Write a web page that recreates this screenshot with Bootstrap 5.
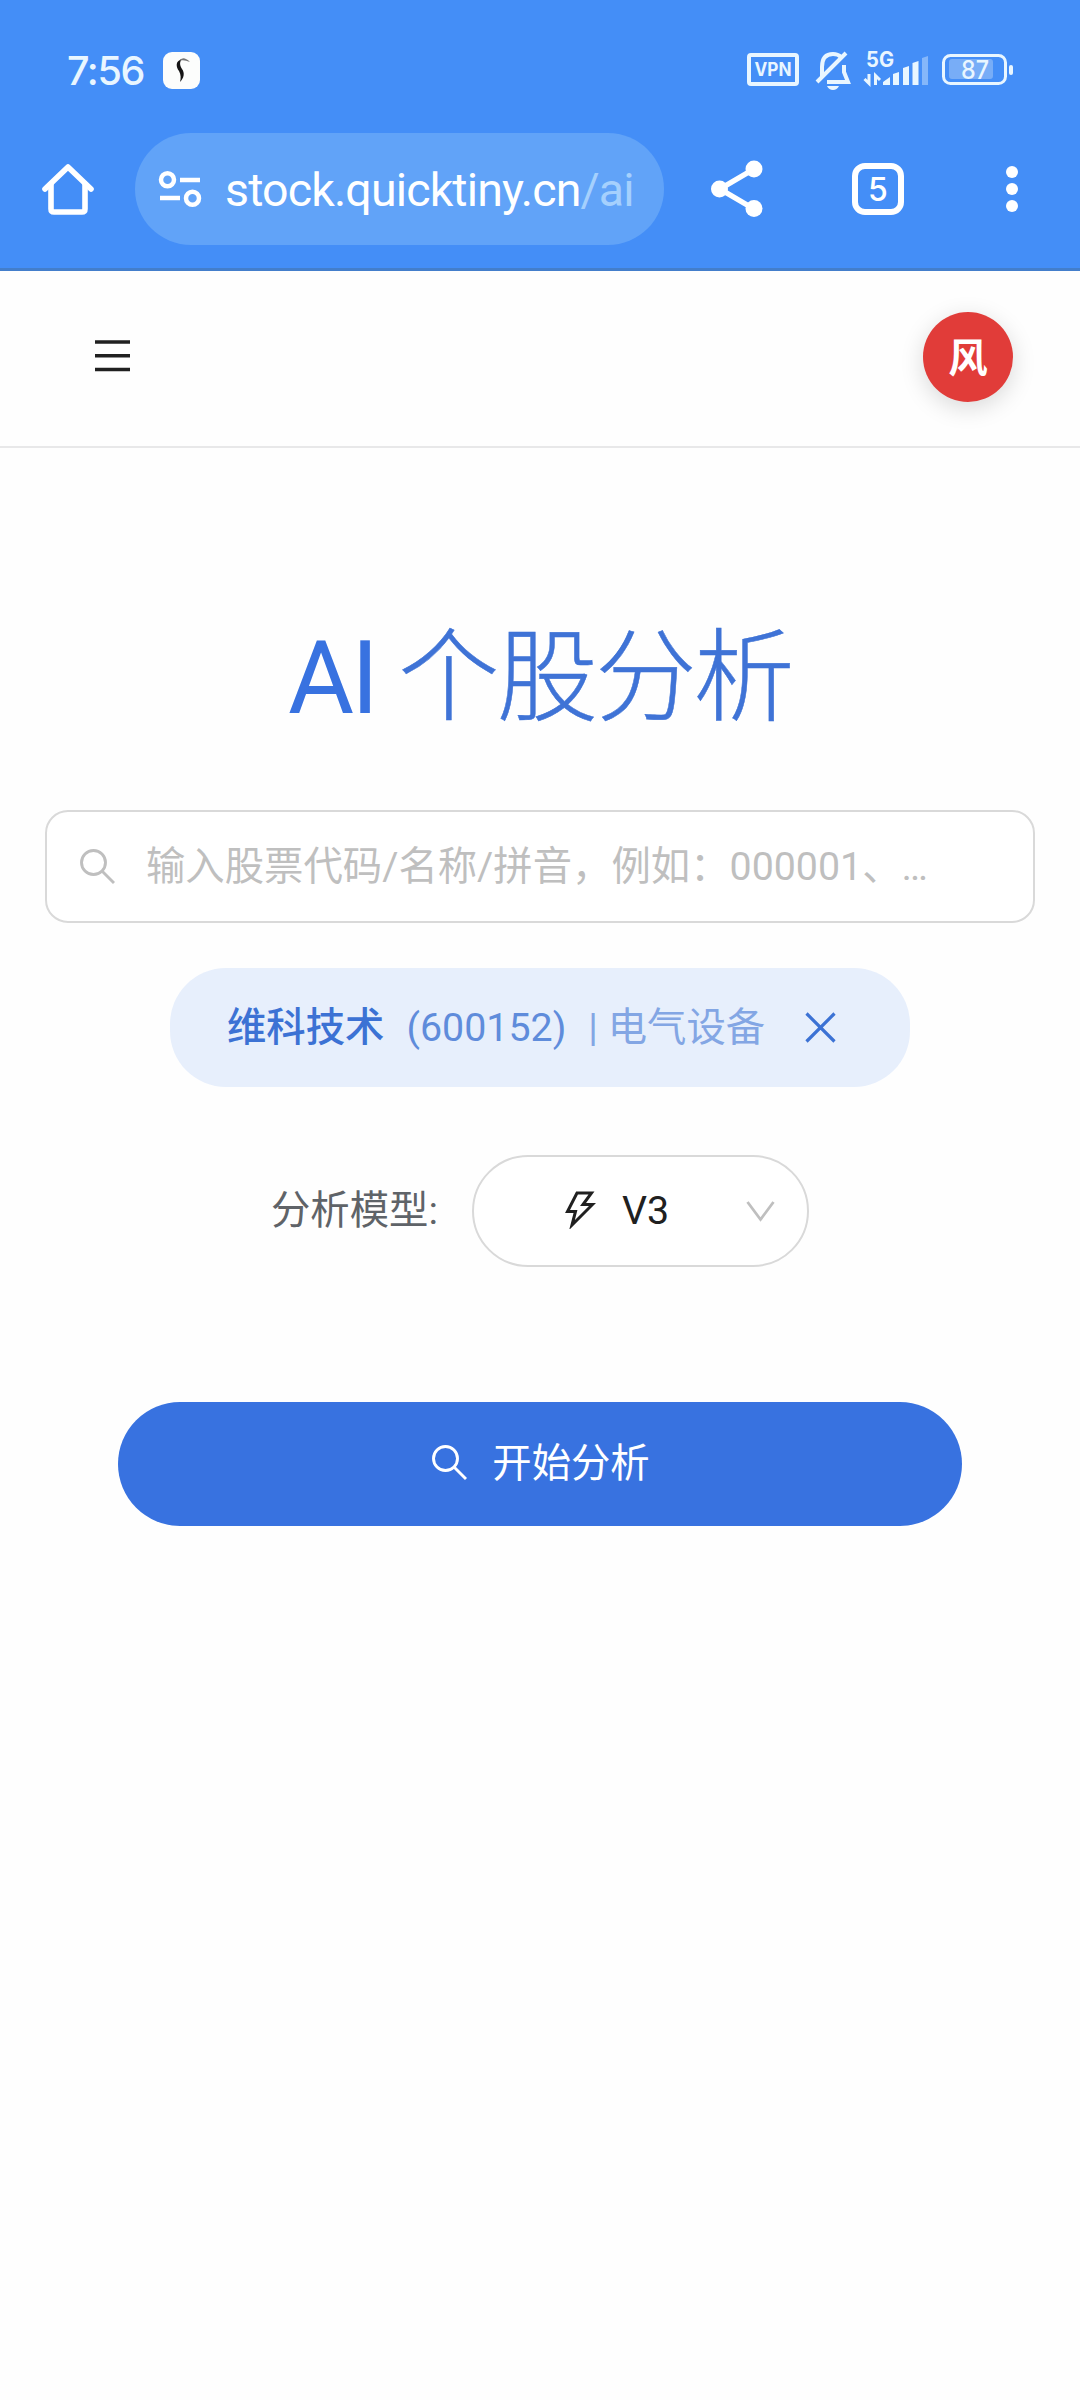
<!DOCTYPE html>
<html lang="zh-CN">
<head>
<meta charset="utf-8">
<meta name="viewport" content="width=device-width, initial-scale=1">
<title>AI 个股分析</title>
<link href="https://cdn.jsdelivr.net/npm/bootstrap@5.3.0/dist/css/bootstrap.min.css" rel="stylesheet">
<style>
body{font-family:Roboto,"Noto Sans CJK SC",sans-serif;font-size:39.375px;line-height:1.5;background:#fefefe;color:#202020;min-height:2400px}
svg{display:block;flex:none}
.browser-top{background:#448ef7;height:271px;border-bottom:3px solid #437ecb}
.status-bar{height:133px;padding:7px 67px 0 67px;color:#e9f6ff}
.clock{font-family:Inter,sans-serif;font-weight:500;font-size:39.5px;letter-spacing:-1.4px;width:96px;line-height:1;padding-top:3px}
.tool-bar{height:112px;padding-left:42px}
.omnibox{width:529px;height:112px;margin-left:41px;padding-left:23px;background:#61a3f8;color:#fff}
.url-text{font-size:46.5px;margin-left:23px;line-height:1;white-space:nowrap;letter-spacing:-.85px;padding-top:2px}
.url-path{color:#a5d0fd}
.icon-share{margin-left:47px}
.icon-tabs{margin-left:89px}
.icon-more{margin-left:102px}
.site-header{height:177px;border-bottom:2px solid #e8e8e9;padding:0 67px 5px 95px}
.avatar{width:90px;height:90px;margin-top:2px;padding-top:3px;background:#e13c39;color:#fff;font-size:39.375px;font-weight:700;box-shadow:0 6px 23px rgba(0,0,0,.15);line-height:1}
.page-main{padding:0 45px}
.page-title{margin:153px 0 0;font-size:101.25px;line-height:136px;letter-spacing:-2.81px;color:#3872e0;white-space:nowrap}
.page-title .cjk{font-family:"Noto Sans CJK SC",sans-serif;font-weight:300;color:#3f73d6;-webkit-text-stroke:.5px #3f73d6}
.search-box{margin-top:63px;height:113px;border:2px solid #d9d9d9;border-radius:23px;padding-left:33px;color:#bfbfbf;background:#fff}
.search-hint{margin-left:31px;white-space:nowrap}
.stock-chip{margin-top:45px;width:740px;height:119px;border-radius:56px;background:#e7effc;padding-left:57px;color:#3c72d4;white-space:nowrap}
.chip-name{font-weight:500}
.chip-code{margin-left:22px;color:#5f8cdb}
.chip-sector{margin-left:22px;color:#83a6e4}
.chip-close{margin-left:40px}
.model-row{margin-top:68px}
.model-label{color:#5f6368;white-space:nowrap}
.model-select{width:337px;height:112px;border:2px solid #d9d9d9;margin-left:34px;padding-left:91px;background:#fff}
.bolt{margin-bottom:3px}
.model-name{margin-left:26px}
.chevron{margin-left:77px}
.start-btn,.start-btn:hover{margin-top:135px;width:844px;height:124px;background:#3872e0;border:0;color:#fff;font-size:39.375px;font-weight:400}
.start-btn svg{margin:0 0 3px 2px}
.start-text{margin-left:25px}
</style>
</head>
<body>
<header class="browser-top">
  <div class="status-bar d-flex align-items-center">
    <span class="clock">7:56</span>
    <svg width="37" height="37" viewBox="0 0 37 37"><rect width="37" height="37" rx="9" fill="#fcfdfc"/><path d="M19 7C12 9 13 15 16 19C18 23 18 26 17 30C21 26 22 21 19 17C17 14 16 10 19 7Z" fill="#151515"/><path d="M16 9Q20 3 27 10Q20 7 16 9Z" fill="#777"/></svg>
    <svg class="ms-auto" width="266" height="60" viewBox="747 40 266 60" fill="none" stroke="#e9f6ff" font-family="Inter, sans-serif">
      <rect x="749" y="55" width="48" height="29" rx="2" stroke-width="4"/>
      <text x="754.500" y="76" font-size="19" font-weight="700" fill="#e9f6ff" stroke="none" textLength="37" lengthAdjust="spacingAndGlyphs">VPN</text>
      <path d="M822 77V67Q822 54 833 54Q838 54 841 57M817 82L846 53M844 65V72L848 82H827" stroke-width="4"/>
      <path d="M827 86H839Q837 90 833 90Q829 90 827 86Z" fill="#e9f6ff" stroke="none"/>
      <text x="866" y="67" font-size="21" font-weight="700" fill="#e9f6ff" stroke="none" textLength="28" lengthAdjust="spacingAndGlyphs">5G</text>
      <path d="M864.500 79L869 83.500V74M875.500 85V75.500L880 80" stroke-width="3"/>
      <g fill="#e9f6ff" stroke="none"><path d="M883 82L890 77V85H883ZM893 74L899 72V85H893ZM903 68L909 66V85H903ZM912.500 63L918.500 61V85H912.500Z"/><path opacity=".4" d="M922 58L928 56V85H922Z"/></g>
      <rect x="943.500" y="55.500" width="62" height="28" rx="7" stroke-width="3"/>
      <rect x="949" y="59" width="44" height="20" rx="3" fill="#78adf7" stroke="none"/>
      <text x="961" y="79" font-size="25" font-weight="500" fill="#e9f6ff" stroke="none" textLength="28" lengthAdjust="spacingAndGlyphs">87</text>
      <rect x="1009" y="65" width="4" height="10" rx="2" fill="#e9f6ff" stroke="none"/>
    </svg>
  </div>
  <div class="tool-bar d-flex align-items-center">
    <svg width="52" height="52" viewBox="42 163 52 52" fill="none" stroke="#fff" stroke-width="5.600" stroke-linecap="round" stroke-linejoin="round"><path d="M45 189L68 167L91 189"/><path d="M51 184V209Q51 212 54 212H82Q85 212 85 209V184"/></svg>
    <div class="omnibox rounded-pill d-flex align-items-center">
      <svg width="44" height="38" viewBox="158 170 44 38" fill="none" stroke="#fff" stroke-width="4.500"><circle cx="167.500" cy="179.700" r="6.500"/><circle cx="192.500" cy="198.300" r="6.500"/><path d="M180 180H200M160 198H180"/></svg>
      <span class="url-text">stock.quicktiny.cn<span class="url-path">/ai</span></span>
    </div>
    <svg class="icon-share" width="52" height="58" viewBox="711 160 52 58" fill="#fff"><path d="M754 169L720 189L754 209" fill="none" stroke="#fff" stroke-width="5.500"/><circle cx="719.500" cy="189" r="8.500"/><circle cx="754" cy="169" r="8.500"/><circle cx="754" cy="208.500" r="8.500"/></svg>
    <svg class="icon-tabs" width="52" height="52" viewBox="852 163 52 52"><rect x="855" y="166" width="46" height="46" rx="10" fill="none" stroke="#fff" stroke-width="6"/><text x="878" y="201" font-family="Inter, sans-serif" font-weight="500" font-size="32" text-anchor="middle" fill="#fff">5</text></svg>
    <svg class="icon-more" width="12" height="46" viewBox="1006 166 12 46" fill="#fff"><circle cx="1012" cy="172" r="6"/><circle cx="1012" cy="189" r="6"/><circle cx="1012" cy="206" r="6"/></svg>
  </div>
</header>

<nav class="site-header d-flex align-items-center justify-content-between">
  <svg width="35" height="32" viewBox="0 0 35 32" stroke="#202020" stroke-width="3.400"><path d="M0 2H35M0 15.800H35M0 29.500H35"/></svg>
  <div class="avatar rounded-circle d-flex align-items-center justify-content-center">风</div>
</nav>

<main class="page-main d-flex flex-column align-items-center">
  <h1 class="page-title text-center fw-normal">AI <span class="cjk">个股分析</span></h1>
  <div class="search-box w-100 d-flex align-items-center">
    <svg width="35" height="35" viewBox="0 0 35 35" fill="none" stroke="#bfbfbf" stroke-width="2.900"><circle cx="13.500" cy="13.500" r="12"/><path d="M22 22L34 34"/></svg>
    <span class="search-hint">输入股票代码/名称/拼音，例如：000001、…</span>
  </div>
  <div class="stock-chip d-flex align-items-center">
    <span class="chip-name">维科技术</span>
    <span class="chip-code">(600152)</span>
    <span class="chip-sector">| 电气设备</span>
    <svg class="chip-close" width="31" height="31" viewBox="0 0 31 31" stroke="#3c72d4" stroke-width="3.200"><path d="M1.500 1.500L29.500 29.500M29.500 1.500L1.500 29.500"/></svg>
  </div>
  <div class="model-row d-flex align-items-center">
    <span class="model-label">分析模型:</span>
    <div class="model-select rounded-pill d-flex align-items-center">
      <svg class="bolt" width="31" height="38" viewBox="0 0 31 38" fill="none" stroke="#202020" stroke-width="3"><path d="M12 2H26.500L18 13.500H27.500L7 34L10.500 20.500H2.500Z"/></svg>
      <span class="model-name">V3</span>
      <svg class="chevron" width="29" height="21" viewBox="0 0 29 21" fill="none" stroke="#bfbfbf" stroke-width="2.800"><path d="M1.500 1L14.500 18.500L27.500 1"/></svg>
    </div>
  </div>
  <button type="button" class="start-btn btn rounded-pill d-flex align-items-center justify-content-center">
    <svg width="35" height="35" viewBox="0 0 35 35" fill="none" stroke="#fff" stroke-width="2.900"><circle cx="13.500" cy="13.500" r="12"/><path d="M22 22L34 34"/></svg>
    <span class="start-text">开始分析</span>
  </button>
</main>
<script src="https://cdn.jsdelivr.net/npm/bootstrap@5.3.0/dist/js/bootstrap.bundle.min.js"></script>
</body>
</html>
